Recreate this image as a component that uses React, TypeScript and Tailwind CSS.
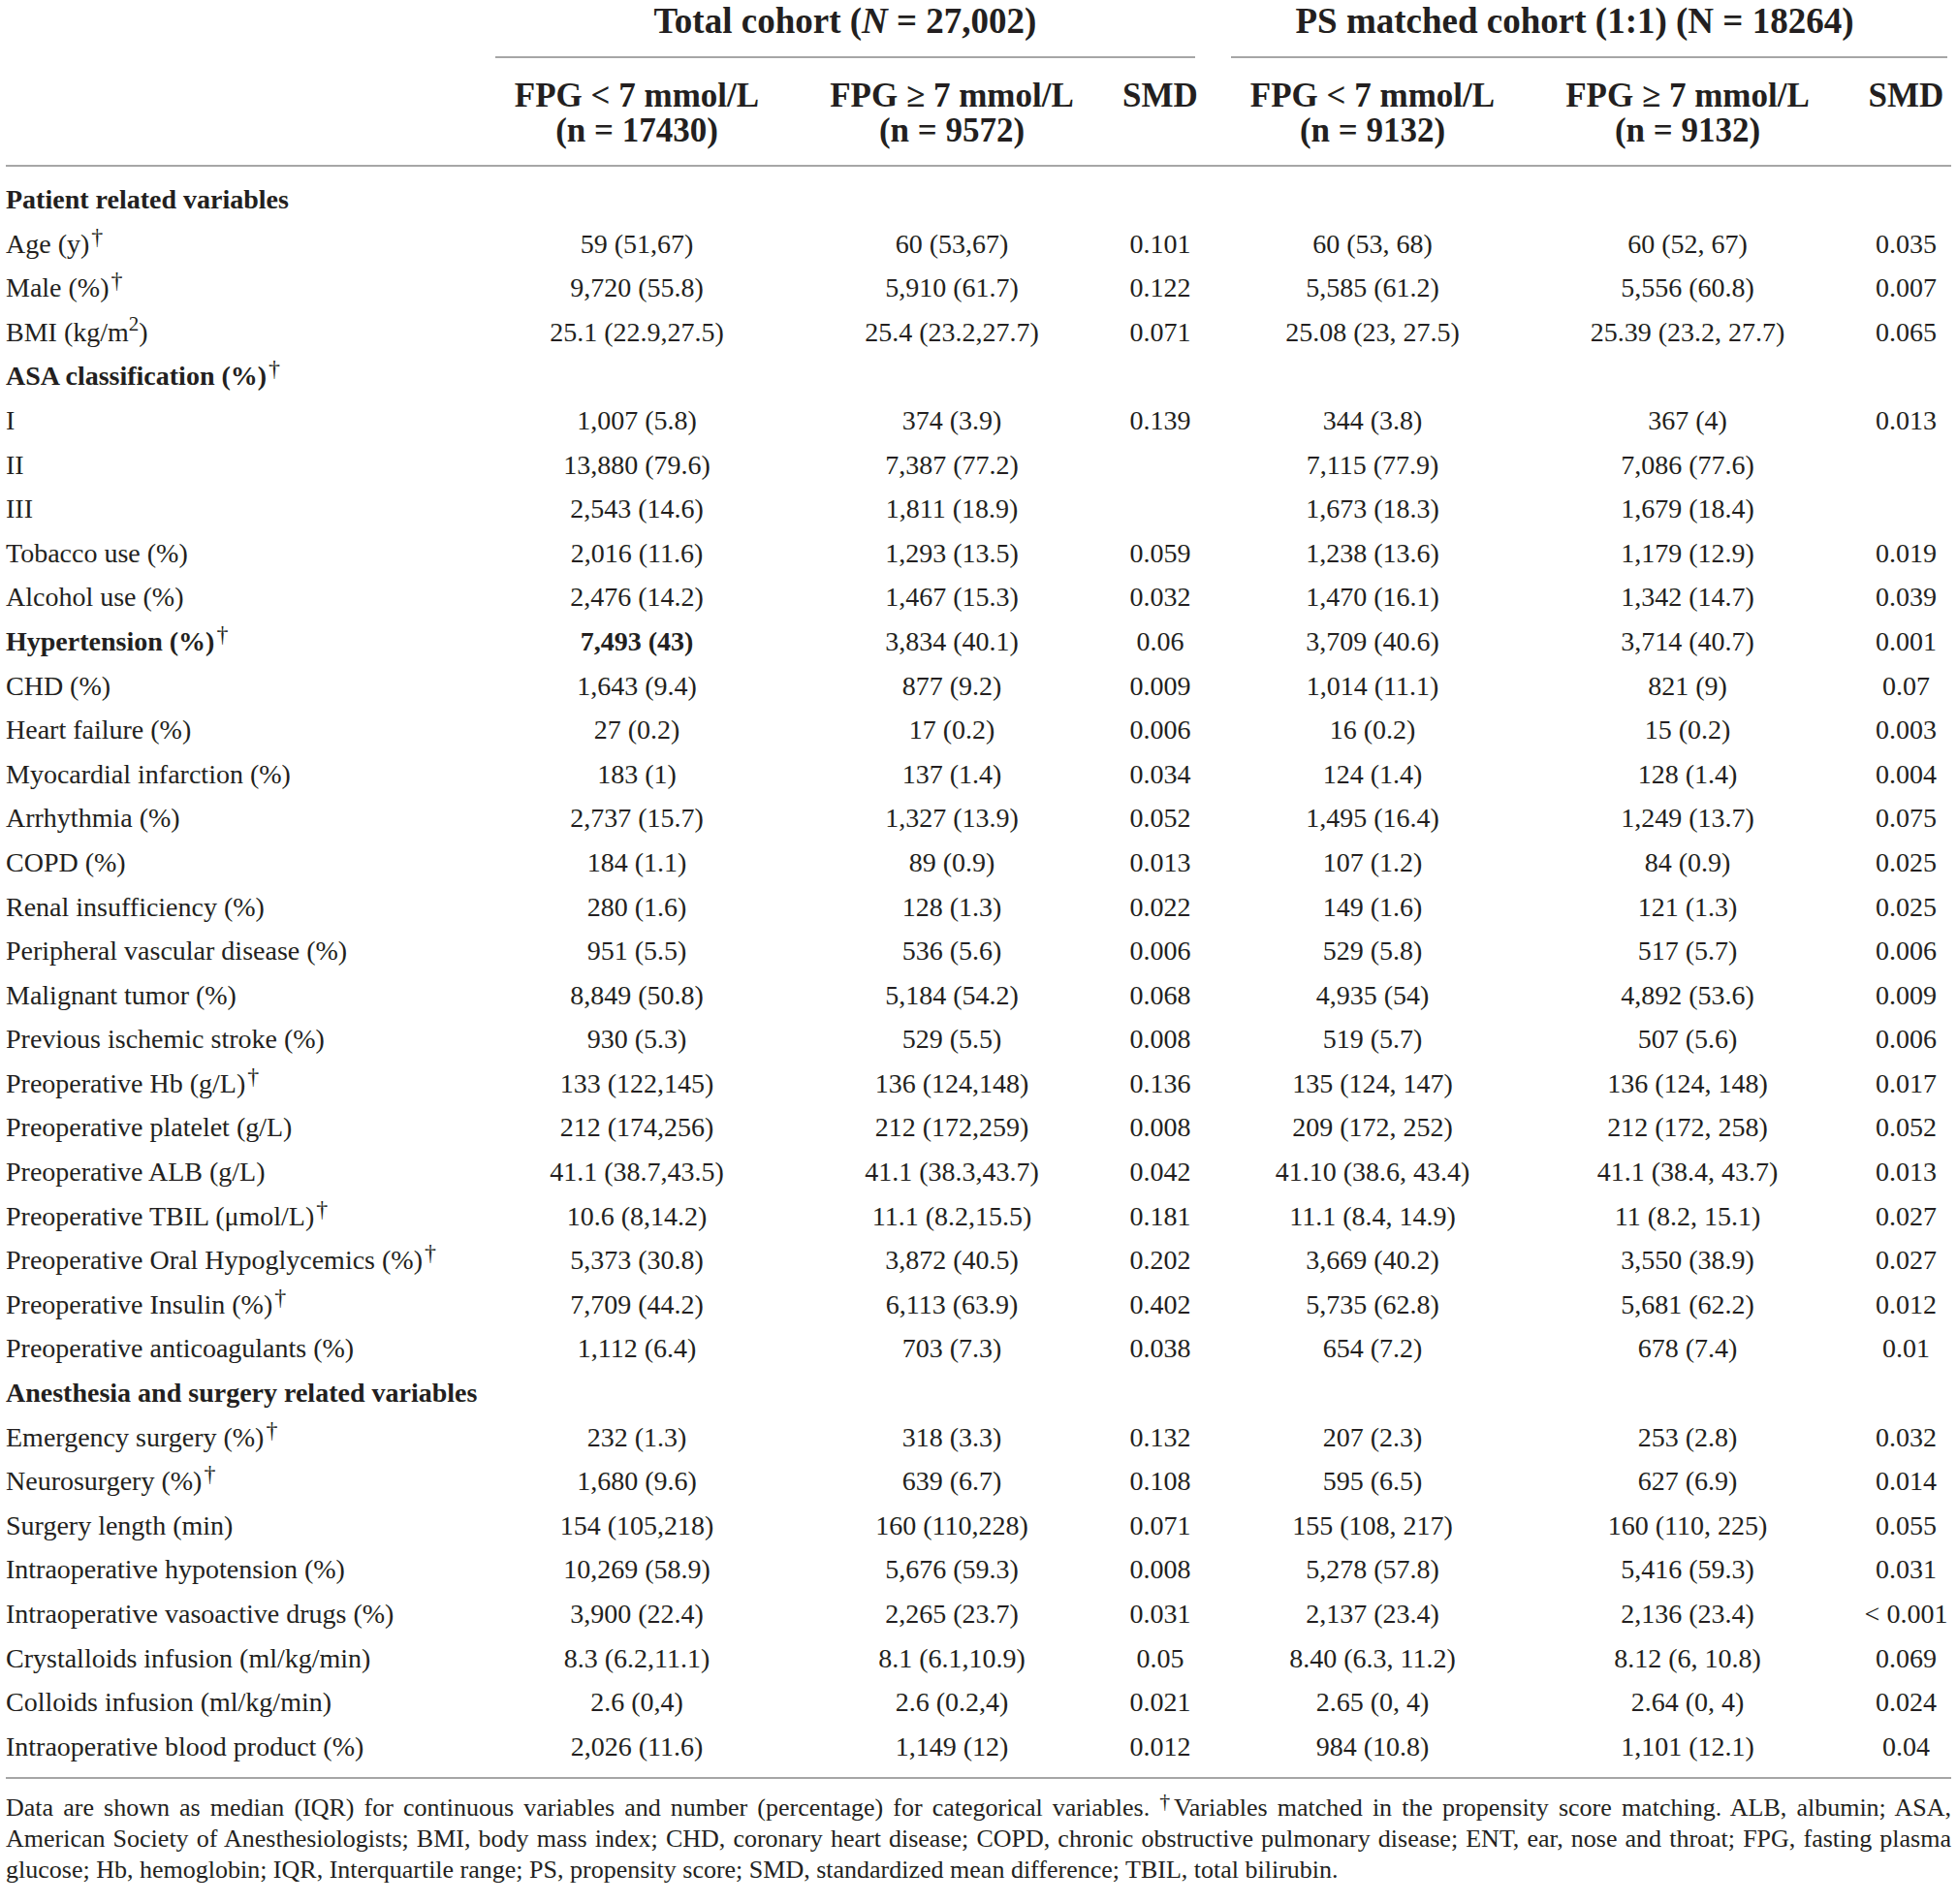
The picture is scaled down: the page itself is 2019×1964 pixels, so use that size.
import React from "react";

const GRID =
  "grid grid-cols-[505px_292px_358px_72px_37px_292px_358px_93px]";

type R = {
  label: React.ReactNode;
  v?: string[];
  bold?: boolean;
  boldFirst?: boolean;
};

const D = () => (
  <span className="relative -top-[9px] ml-[2px] text-[24px] leading-none font-normal">†</span>
);

const rows: R[] = [
  { label: "Patient related variables", bold: true },
  { label: <>Age (y)<D /></>, v: ["59 (51,67)", "60 (53,67)", "0.101", "60 (53, 68)", "60 (52, 67)", "0.035"] },
  { label: <>Male (%)<D /></>, v: ["9,720 (55.8)", "5,910 (61.7)", "0.122", "5,585 (61.2)", "5,556 (60.8)", "0.007"] },
  { label: <>BMI (kg/m<sup>2</sup>)</>, v: ["25.1 (22.9,27.5)", "25.4 (23.2,27.7)", "0.071", "25.08 (23, 27.5)", "25.39 (23.2, 27.7)", "0.065"] },
  { label: <>ASA classification (%)<D /></>, bold: true },
  { label: "I", v: ["1,007 (5.8)", "374 (3.9)", "0.139", "344 (3.8)", "367 (4)", "0.013"] },
  { label: "II", v: ["13,880 (79.6)", "7,387 (77.2)", "", "7,115 (77.9)", "7,086 (77.6)", ""] },
  { label: "III", v: ["2,543 (14.6)", "1,811 (18.9)", "", "1,673 (18.3)", "1,679 (18.4)", ""] },
  { label: "Tobacco use (%)", v: ["2,016 (11.6)", "1,293 (13.5)", "0.059", "1,238 (13.6)", "1,179 (12.9)", "0.019"] },
  { label: "Alcohol use (%)", v: ["2,476 (14.2)", "1,467 (15.3)", "0.032", "1,470 (16.1)", "1,342 (14.7)", "0.039"] },
  { label: <>Hypertension (%)<D /></>, bold: true, boldFirst: true, v: ["7,493 (43)", "3,834 (40.1)", "0.06", "3,709 (40.6)", "3,714 (40.7)", "0.001"] },
  { label: "CHD (%)", v: ["1,643 (9.4)", "877 (9.2)", "0.009", "1,014 (11.1)", "821 (9)", "0.07"] },
  { label: "Heart failure (%)", v: ["27 (0.2)", "17 (0.2)", "0.006", "16 (0.2)", "15 (0.2)", "0.003"] },
  { label: "Myocardial infarction (%)", v: ["183 (1)", "137 (1.4)", "0.034", "124 (1.4)", "128 (1.4)", "0.004"] },
  { label: "Arrhythmia (%)", v: ["2,737 (15.7)", "1,327 (13.9)", "0.052", "1,495 (16.4)", "1,249 (13.7)", "0.075"] },
  { label: "COPD (%)", v: ["184 (1.1)", "89 (0.9)", "0.013", "107 (1.2)", "84 (0.9)", "0.025"] },
  { label: "Renal insufficiency (%)", v: ["280 (1.6)", "128 (1.3)", "0.022", "149 (1.6)", "121 (1.3)", "0.025"] },
  { label: "Peripheral vascular disease (%)", v: ["951 (5.5)", "536 (5.6)", "0.006", "529 (5.8)", "517 (5.7)", "0.006"] },
  { label: "Malignant tumor (%)", v: ["8,849 (50.8)", "5,184 (54.2)", "0.068", "4,935 (54)", "4,892 (53.6)", "0.009"] },
  { label: "Previous ischemic stroke (%)", v: ["930 (5.3)", "529 (5.5)", "0.008", "519 (5.7)", "507 (5.6)", "0.006"] },
  { label: <>Preoperative Hb (g/L)<D /></>, v: ["133 (122,145)", "136 (124,148)", "0.136", "135 (124, 147)", "136 (124, 148)", "0.017"] },
  { label: "Preoperative platelet (g/L)", v: ["212 (174,256)", "212 (172,259)", "0.008", "209 (172, 252)", "212 (172, 258)", "0.052"] },
  { label: "Preoperative ALB (g/L)", v: ["41.1 (38.7,43.5)", "41.1 (38.3,43.7)", "0.042", "41.10 (38.6, 43.4)", "41.1 (38.4, 43.7)", "0.013"] },
  { label: <>Preoperative TBIL (μmol/L)<D /></>, v: ["10.6 (8,14.2)", "11.1 (8.2,15.5)", "0.181", "11.1 (8.4, 14.9)", "11 (8.2, 15.1)", "0.027"] },
  { label: <>Preoperative Oral Hypoglycemics (%)<D /></>, v: ["5,373 (30.8)", "3,872 (40.5)", "0.202", "3,669 (40.2)", "3,550 (38.9)", "0.027"] },
  { label: <>Preoperative Insulin (%)<D /></>, v: ["7,709 (44.2)", "6,113 (63.9)", "0.402", "5,735 (62.8)", "5,681 (62.2)", "0.012"] },
  { label: "Preoperative anticoagulants (%)", v: ["1,112 (6.4)", "703 (7.3)", "0.038", "654 (7.2)", "678 (7.4)", "0.01"] },
  { label: "Anesthesia and surgery related variables", bold: true },
  { label: <>Emergency surgery (%)<D /></>, v: ["232 (1.3)", "318 (3.3)", "0.132", "207 (2.3)", "253 (2.8)", "0.032"] },
  { label: <>Neurosurgery (%)<D /></>, v: ["1,680 (9.6)", "639 (6.7)", "0.108", "595 (6.5)", "627 (6.9)", "0.014"] },
  { label: "Surgery length (min)", v: ["154 (105,218)", "160 (110,228)", "0.071", "155 (108, 217)", "160 (110, 225)", "0.055"] },
  { label: "Intraoperative hypotension (%)", v: ["10,269 (58.9)", "5,676 (59.3)", "0.008", "5,278 (57.8)", "5,416 (59.3)", "0.031"] },
  { label: "Intraoperative vasoactive drugs (%)", v: ["3,900 (22.4)", "2,265 (23.7)", "0.031", "2,137 (23.4)", "2,136 (23.4)", "< 0.001"] },
  { label: "Crystalloids infusion (ml/kg/min)", v: ["8.3 (6.2,11.1)", "8.1 (6.1,10.9)", "0.05", "8.40 (6.3, 11.2)", "8.12 (6, 10.8)", "0.069"] },
  { label: "Colloids infusion (ml/kg/min)", v: ["2.6 (0,4)", "2.6 (0.2,4)", "0.021", "2.65 (0, 4)", "2.64 (0, 4)", "0.024"] },
  { label: "Intraoperative blood product (%)", v: ["2,026 (11.6)", "1,149 (12)", "0.012", "984 (10.8)", "1,101 (12.1)", "0.04"] },
];

function Cell({ children, bold }: { children: React.ReactNode; bold?: boolean }) {
  return (
    <div className={"flex items-center justify-center whitespace-nowrap " + (bold ? "font-bold" : "")}>
      {children}
    </div>
  );
}

function Row({ r }: { r: R }) {
  const v = r.v ?? ["", "", "", "", "", ""];
  return (
    <div className={GRID + " h-[45.6px]"}>
      <div className={"flex items-center whitespace-nowrap " + (r.bold ? "font-bold" : "")}>
        <span>{r.label}</span>
      </div>
      <Cell bold={r.boldFirst}>{v[0]}</Cell>
      <Cell>{v[1]}</Cell>
      <Cell>{v[2]}</Cell>
      <div />
      <Cell>{v[3]}</Cell>
      <Cell>{v[4]}</Cell>
      <Cell>{v[5]}</Cell>
    </div>
  );
}

function HeadCell({ a, b }: { a: React.ReactNode; b?: React.ReactNode }) {
  return (
    <div className="flex flex-col items-center whitespace-nowrap leading-[36px]">
      <div>{a}</div>
      {b && <div>{b}</div>}
    </div>
  );
}

export default function App() {
  return (
    <div className="min-h-[1964px] w-[2019px] bg-white px-[6px] font-['Liberation_Serif',serif] text-[28px] leading-[45.6px] text-[#231f20]">
      {/* group headers */}
      <div className={GRID + " h-[58px] text-[37px] font-bold leading-[44px]"}>
        <div />
        <div className="col-span-3 flex justify-center whitespace-nowrap">
          <span>
            Total cohort (<i>N</i> = 27,002)
          </span>
        </div>
        <div />
        <div className="col-span-3 flex justify-center whitespace-nowrap pr-[34px]">
          PS matched cohort (1:1) (N = 18264)
        </div>
      </div>
      <div className={GRID + " h-[2px]"}>
        <div />
        <div className="col-span-3 bg-[#a6a6a6]" />
        <div />
        <div className="col-span-3 mr-[4px] bg-[#a6a6a6]" />
      </div>
      {/* column headers */}
      <div className={GRID + " pt-[21px] pb-[17px] text-[35px] font-bold"}>
        <div />
        <HeadCell a="FPG < 7 mmol/L" b="(n = 17430)" />
        <HeadCell a="FPG ≥ 7 mmol/L" b="(n = 9572)" />
        <HeadCell a="SMD" />
        <div />
        <HeadCell a="FPG < 7 mmol/L" b="(n = 9132)" />
        <HeadCell a="FPG ≥ 7 mmol/L" b="(n = 9132)" />
        <HeadCell a="SMD" />
      </div>
      <div className="h-[2px] bg-[#a6a6a6]" />
      {/* body */}
      <div className="pt-[11px] pb-[9px]">
        {rows.map((r, i) => (
          <Row key={i} r={r} />
        ))}
      </div>
      <div className="h-[2px] bg-[#a6a6a6]" />
      {/* footnote */}
      <div className="pt-[14px] text-[26px] leading-[32px]">
        <div className="text-justify [text-align-last:justify]">
          Data are shown as median (IQR) for continuous variables and number (percentage) for categorical variables.{" "}
          <span className="relative -top-[8px] text-[22px] leading-none">†</span>Variables matched in the propensity score
          matching. ALB, albumin; ASA,
        </div>
        <div className="text-justify [text-align-last:justify]">
          American Society of Anesthesiologists; BMI, body mass index; CHD, coronary heart disease; COPD, chronic
          obstructive pulmonary disease; ENT, ear, nose and throat; FPG, fasting plasma
        </div>
        <div>
          glucose; Hb, hemoglobin; IQR, Interquartile range; PS, propensity score; SMD, standardized mean difference;
          TBIL, total bilirubin.
        </div>
      </div>
    </div>
  );
}
